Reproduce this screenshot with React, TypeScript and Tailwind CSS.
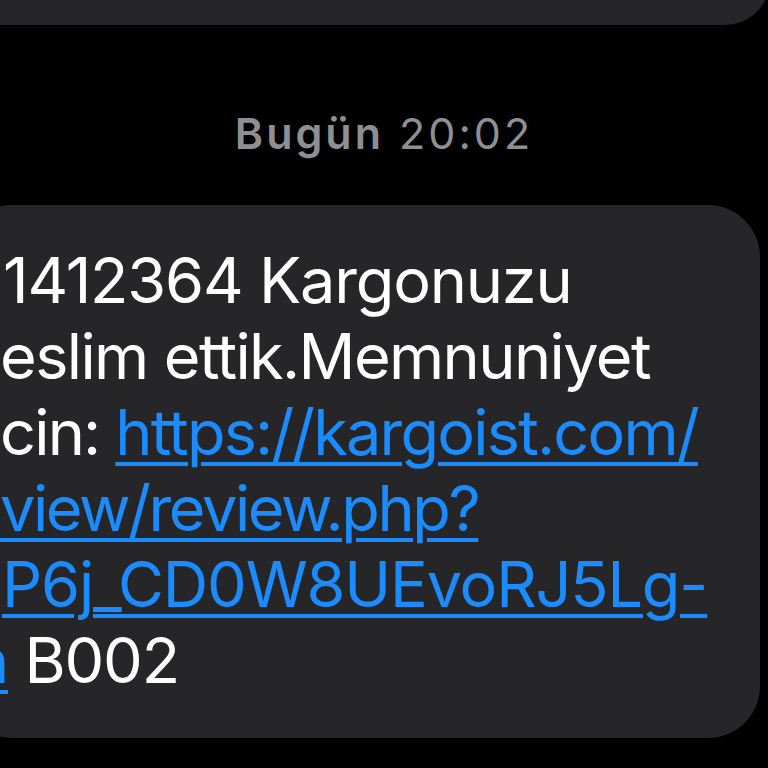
import React from 'react';

const Link = ({ children }: { children: React.ReactNode }) => (
    <span className="text-[#1a8cff] underline decoration-[4px] underline-offset-[7px]">{children}</span>
);

export default function App() {
    return (
        <div className="w-[768px] h-[768px] bg-black overflow-hidden font-['Inter',sans-serif] antialiased">
            {/* previous bubble, only its bottom edge is visible */}
            <div className="w-[780px] h-[100px] -mt-[75px] -ml-[10px] bg-[#262629] rounded-br-[45px]" />

            <div className="mt-[86px] text-center text-[43px] leading-[44px] text-[#8e8e93] tracking-[3px]">
                <span className="font-semibold">Bugün</span> <span>20:02</span>
            </div>

            <div className="mt-[50px] -ml-[40px] w-[800px] bg-[#262629] rounded-[52px] pl-[40px] pt-[37px] pb-[40px] text-white text-[63px] leading-[76px] tracking-[-1.2px] whitespace-nowrap">
                <div className="ml-[3px]">1412364 Kargonuzu</div>
                <div className="tracking-[-1.6px]">eslim ettik.Memnuniyet</div>
                <div className="tracking-[-1.8px]">cin: <Link>https://kargoist.com/</Link></div>
                <div className="tracking-[-2.4px]"><Link>view/review.php?</Link></div>
                <div className="ml-[2px]"><Link>P6j_CD0W8UEvoRJ5Lg-</Link></div>
                <div className="-ml-[28px]"><Link>n</Link> B002</div>
            </div>
        </div>
    );
}
